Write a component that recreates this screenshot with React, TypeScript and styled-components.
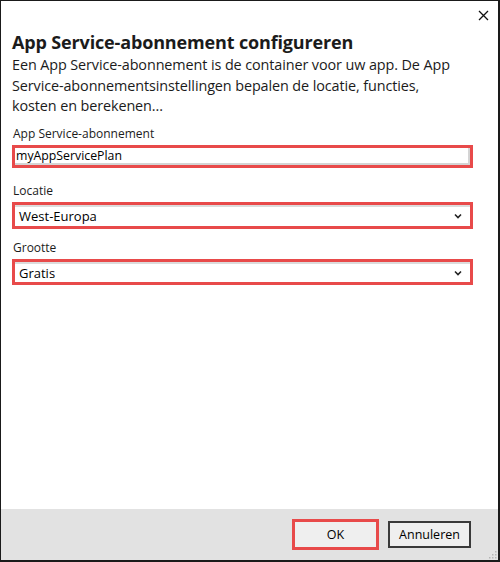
import React from "react";
import styled, { createGlobalStyle } from "styled-components";

const Global = createGlobalStyle`
  html, body { margin: 0; padding: 0; background: #fff; }
  * { box-sizing: border-box; }
`;

const Dialog = styled.div`
  width: 500px;
  height: 562px;
  display: flex;
  flex-direction: column;
  border: 1px solid #1a1a1a;
  border-right-width: 2px;
  border-bottom-width: 2px;
  background: #fff;
  font-family: "Open Sans", "Noto Sans", sans-serif;
  color: #1b1b1b;
  position: relative;
`;

const TitleBar = styled.div`
  height: 28px;
  display: flex;
  justify-content: flex-end;
  align-items: center;
  padding-right: 9px;
`;

const CloseBtn = styled.button`
  border: none;
  background: transparent;
  padding: 0;
  width: 12px;
  height: 12px;
  display: flex;
  align-items: center;
  justify-content: center;
`;

const Body = styled.div`
  flex: 1;
  padding: 0 25px 0 11px;
  display: flex;
  flex-direction: column;
`;

const Title = styled.h1`
  margin: 0;
  font-size: 18px;
  font-weight: 700;
  line-height: 26px;
  letter-spacing: -0.15px;
`;

const Desc = styled.p`
  margin: 0 0 8px;
  width: 452px;
  font-size: 14.4px;
  line-height: 20.5px;
  letter-spacing: -0.1px;
`;

const Field = styled.div<{ $mb: number }>`
  display: flex;
  flex-direction: column;
  margin-bottom: ${(p) => p.$mb}px;
`;

const Label = styled.label`
  font-size: 12px;
  line-height: 18px;
  margin-bottom: 2px;
  padding-left: 1px;
`;

const Highlight = styled.div<{ $h: number }>`
  border: 3px solid #e84a4a;
  height: ${(p) => p.$h}px;
  display: flex;
`;

const TextInput = styled.div`
  flex: 1;
  border-right: 2px solid #d4d4d4;
  border-bottom: 2px solid #d4d4d4;
  font-size: 12.3px;
  display: flex;
  align-items: center;
  padding-left: 1px;
  color: #000;
`;

const SelectBox = styled.div`
  flex: 1;
  border-top: 2px solid #dcdcdc;
  font-size: 13px;
  display: flex;
  align-items: center;
  justify-content: space-between;
  padding: 0 8px 0 4px;
  color: #000;
`;

const Footer = styled.div`
  height: 51px;
  background: #e2e2e2;
  display: flex;
  justify-content: flex-end;
  align-items: center;
  padding-right: 27px;
  gap: 9px;
  position: relative;
`;

const OkWrap = styled.div`
  border: 3px solid #e84a4a;
  width: 87px;
  height: 31px;
  display: flex;
`;

const Button = styled.button<{ $outlined?: boolean }>`
  flex: ${(p) => (p.$outlined ? "none" : "1")};
  width: ${(p) => (p.$outlined ? "83px" : "auto")};
  height: ${(p) => (p.$outlined ? "27px" : "auto")};
  background: #efefef;
  border: ${(p) => (p.$outlined ? "2px solid #3a3a3a" : "none")};
  font-family: "Open Sans", "Noto Sans", sans-serif;
  font-size: 12.5px;
  color: #000;
  padding: 0;
`;

const Grip = styled.svg`
  position: absolute;
  right: 1px;
  bottom: 1px;
`;

const Chevron = () => (
  <svg width="8" height="6" viewBox="0 0 8 6">
    <path d="M1 1.5 L4 4.5 L7 1.5" fill="none" stroke="#222" strokeWidth="1.6" />
  </svg>
);

export default function App() {
  return (
    <>
      <Global />
      <Dialog>
        <TitleBar>
          <CloseBtn aria-label="Sluiten">
            <svg width="11" height="11" viewBox="0 0 11 11">
              <path d="M1 1 L10 10 M10 1 L1 10" stroke="#111" strokeWidth="1.3" />
            </svg>
          </CloseBtn>
        </TitleBar>
        <Body>
          <Title>App Service-abonnement configureren</Title>
          <Desc>
            Een App Service-abonnement is de container voor uw app. De App
            Service-abonnementsinstellingen bepalen de locatie, functies,
            kosten en berekenen...
          </Desc>
          <Field $mb={14}>
            <Label>App Service-abonnement</Label>
            <Highlight $h={23}>
              <TextInput>myAppServicePlan</TextInput>
            </Highlight>
          </Field>
          <Field $mb={10}>
            <Label>Locatie</Label>
            <Highlight $h={27}>
              <SelectBox>
                West-Europa
                <Chevron />
              </SelectBox>
            </Highlight>
          </Field>
          <Field $mb={0}>
            <Label>Grootte</Label>
            <Highlight $h={26}>
              <SelectBox>
                Gratis
                <Chevron />
              </SelectBox>
            </Highlight>
          </Field>
        </Body>
        <Footer>
          <OkWrap>
            <Button>OK</Button>
          </OkWrap>
          <Button $outlined>Annuleren</Button>
          <Grip width="10" height="10" viewBox="0 0 10 10">
            {[
              [8, 2], [8, 5], [5, 5], [8, 8], [5, 8], [2, 8],
            ].map(([x, y], i) => (
              <rect key={i} x={x} y={y} width="1.5" height="1.5" fill="#b5b5b5" />
            ))}
          </Grip>
        </Footer>
      </Dialog>
    </>
  );
}
